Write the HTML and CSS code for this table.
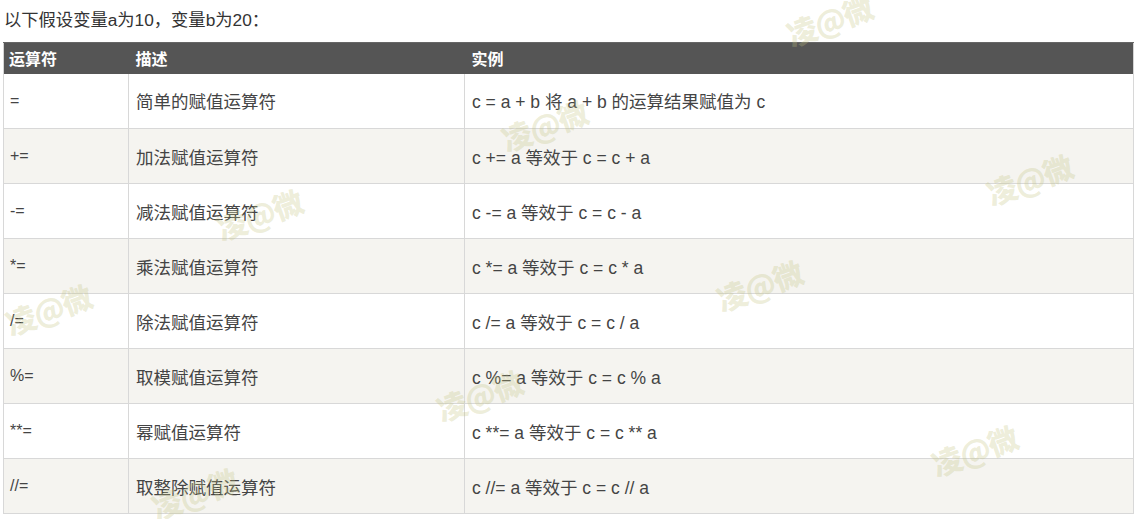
FILE: index.html
```html
<!DOCTYPE html>
<html lang="zh">
<head>
<meta charset="utf-8">
<link rel="stylesheet" href="styles.css">
</head>
<body>
<div class="page">
  <p class="intro">以下假设变量a为10，变量b为20：</p>
  <table class="ops">
    <thead>
      <tr><th class="c1">运算符</th><th class="c2">描述</th><th class="c3">实例</th></tr>
    </thead>
    <tbody>
      <tr><td>=</td><td>简单的赋值运算符</td><td>c = a + b 将 a + b 的运算结果赋值为 c</td></tr>
      <tr><td>+=</td><td>加法赋值运算符</td><td>c += a 等效于 c = c + a</td></tr>
      <tr><td>-=</td><td>减法赋值运算符</td><td>c -= a 等效于 c = c - a</td></tr>
      <tr><td>*=</td><td>乘法赋值运算符</td><td>c *= a 等效于 c = c * a</td></tr>
      <tr><td>/=</td><td>除法赋值运算符</td><td>c /= a 等效于 c = c / a</td></tr>
      <tr><td>%=</td><td>取模赋值运算符</td><td>c %= a 等效于 c = c % a</td></tr>
      <tr><td>**=</td><td>幂赋值运算符</td><td>c **= a 等效于 c = c ** a</td></tr>
      <tr><td>//=</td><td>取整除赋值运算符</td><td>c //= a 等效于 c = c // a</td></tr>
    </tbody>
  </table>
  <div class="wm wm1">凌@微</div>
  <div class="wm wm2">凌@微</div>
  <div class="wm wm3">凌@微</div>
  <div class="wm wm4">凌@微</div>
  <div class="wm wm5">凌@微</div>
  <div class="wm wm6">凌@微</div>
  <div class="wm wm7">凌@微</div>
  <div class="wm wm8">凌@微</div>
  <div class="wm wm9">凌@微</div>
</div>
</body>
</html>
```
FILE: styles.css
```css
html, body {
  margin: 0;
  padding: 0;
  background: #fff;
}
.page {
  position: relative;
  width: 1136px;
  height: 519px;
  overflow: hidden;
  padding: 0 2px 0 3px;
  box-sizing: border-box;
  font-family: "Liberation Sans", Arial, "Noto Sans CJK SC", sans-serif;
  color: #444;
}
.intro {
  margin: 0;
  padding: 8px 0 0 1px;
  height: 42px;
  box-sizing: border-box;
  font-size: 17.3px;
  line-height: 24px;
  color: #333;
}
.ops {
  width: 1131px;
  border-collapse: collapse;
  table-layout: fixed;
  font-size: 17.5px;
  border: 1px solid #d4d4d4;
}
.ops th {
  background: #555;
  color: #fff;
  font-weight: bold;
  font-size: 16px;
  text-align: left;
  height: 31px;
  padding: 0 5px;
  box-sizing: border-box;
  border: 0;
  border-top: 1px solid #666;
}
.ops th.c1 { width: 125px; }
.ops th.c2 { width: 336px; padding-left: 7px; }
.ops th.c3 { padding-left: 7px; }
.ops td {
  height: 55px;
  box-sizing: border-box;
  padding: 0 7px;
  border: 1px solid #d8d8d8;
  border-top: 0;
  vertical-align: middle;
  color: #444;
}
.ops td:first-child { padding-left: 6px; font-size: 16px; }
.ops tbody tr:nth-child(even) td { background: #f5f4f0; }
.ops tbody tr:nth-child(odd) td { background: #fff; }
.wm {
  position: absolute;
  font-family: "Noto Sans CJK SC", sans-serif;
  font-weight: 900;
  font-size: 30px;
  line-height: 34px;
  color: rgba(195, 195, 130, 0.3);
  transform: rotate(-20deg);
  pointer-events: none;
  white-space: nowrap;
  letter-spacing: -1px;
}
.wm1 { left: 785px; top: 3px; }
.wm2 { left: 500px; top: 108px; }
.wm3 { left: 215px; top: 197px; }
.wm4 { left: 985px; top: 162px; }
.wm5 { left: 715px; top: 268px; }
.wm6 { left: 4px; top: 292px; }
.wm7 { left: 435px; top: 378px; }
.wm8 { left: 930px; top: 433px; }
.wm9 { left: 150px; top: 476px; }
```
